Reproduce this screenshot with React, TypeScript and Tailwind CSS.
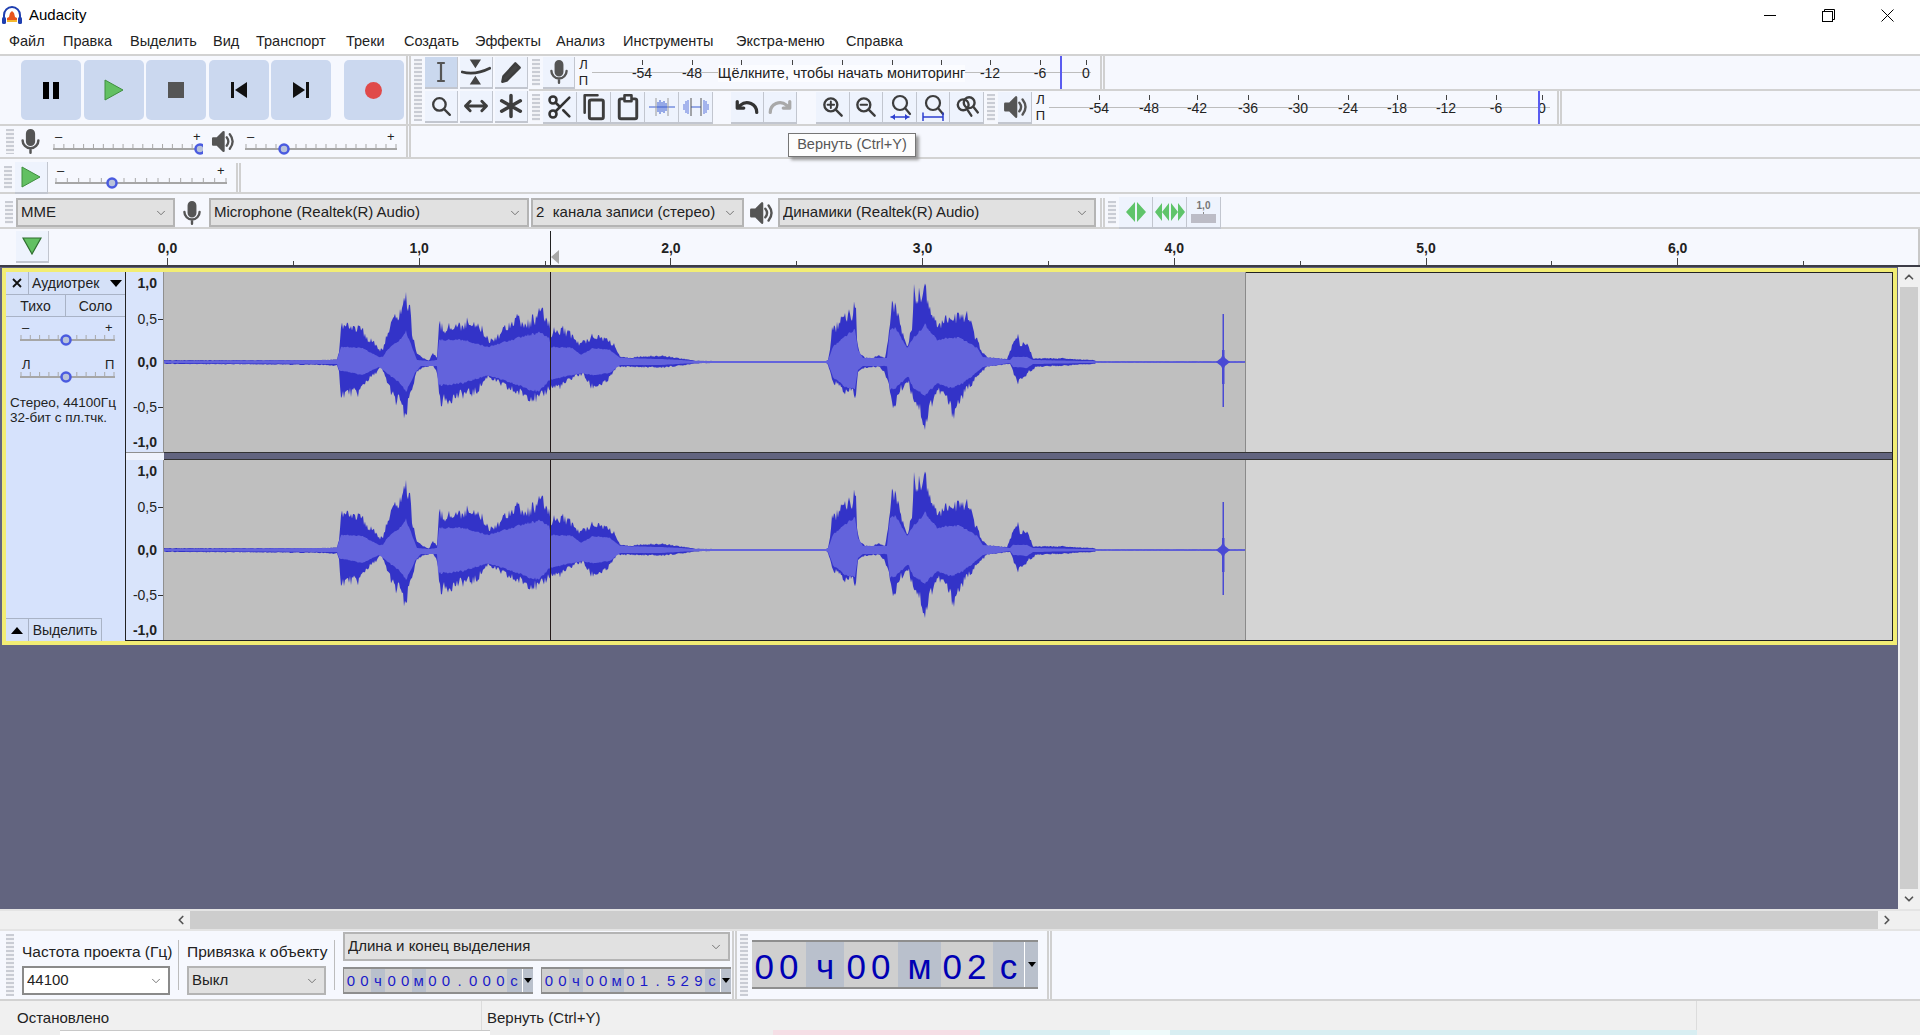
import { ChevronDown, ChevronLeft, ChevronRight, ChevronUp, Scissors } from "lucide-react";
import type { ReactNode } from "react";

const MENU = [
  { t: "Файл", c: "w-[54px]" },
  { t: "Правка", c: "w-[67px]" },
  { t: "Выделить", c: "w-[83px]" },
  { t: "Вид", c: "w-[43px]" },
  { t: "Транспорт", c: "w-[90px]" },
  { t: "Треки", c: "w-[58px]" },
  { t: "Создать", c: "w-[71px]" },
  { t: "Эффекты", c: "w-[81px]" },
  { t: "Анализ", c: "w-[67px]" },
  { t: "Инструменты", c: "w-[113px]" },
  { t: "Экстра-меню", c: "w-[110px]" },
  { t: "Справка", c: "w-[70px]" },
];

type Pt = [number, number];

// waveform envelopes, [page x, offset from the channel centre]
const PEAK_TOP: Pt[] = [
  [164, -2], [316, -2], [337, -3], [339, -12], [341, -41], [349, -39], [358, -37], [361, -39], [366, -25], [372, -25], [379, -14], [383, -12], [387, -32], [396, -50], [400, -52], [404, -70], [410, -60], [412, -32], [417, -10], [423, -4], [429, -2], [433, -9], [437, -5], [439, -44], [442, -37], [459, -39], [473, -45], [482, -35], [490, -23], [499, -30], [507, -40], [516, -48], [526, -39], [541, -54], [549, -42], [551, -32], [562, -36], [572, -29], [579, -19], [587, -24], [593, -30], [606, -25], [614, -19], [620, -5], [631, -5], [660, -7], [680, -4], [695, -1.5], [720, -1], [826, -1],
  [828, -2], [830, -15], [832, -35], [835, -35], [840, -44], [847, -52], [852, -50], [854, -59], [856, -59], [857, -22], [860, -9], [865, -5], [870, -3], [878, -7], [885, -4], [888, -22], [892, -64], [895, -62], [900, -39], [907, -17], [912, -39], [914, -74], [918, -74], [924, -80], [928, -69], [935, -42], [943, -45], [950, -49], [957, -49], [968, -50], [973, -35], [980, -15], [987, -5], [1007, -3], [1012, -17], [1018, -29], [1020, -19], [1028, -19], [1033, -4], [1040, -4], [1063, -4], [1077, -3], [1095, -2], [1096, -0.8], [1246, -0.8],
];
const PEAK_BOTTOM: Pt[] = [
  [164, 2], [316, 3], [337, 4], [339, 11], [341, 35], [349, 33], [358, 34], [366, 21], [375, 13], [381, 5], [387, 21], [396, 45], [400, 38], [405, 66], [410, 35], [417, 11], [425, 5], [433, 4], [437, 11], [440, 43], [450, 40], [463, 35], [476, 33], [488, 15], [499, 23], [510, 30], [526, 36], [539, 41], [549, 28], [562, 26], [575, 15], [583, 13], [591, 27], [606, 23], [617, 5], [621, 5], [660, 6], [680, 4], [695, 1.5], [720, 1], [826, 1],
  [828, 3], [832, 20], [843, 30], [847, 35], [852, 30], [856, 38], [858, 11], [865, 6], [880, 5], [888, 18], [892, 51], [895, 45], [900, 31], [908, 20], [912, 35], [920, 51], [925, 71], [930, 48], [937, 31], [945, 36], [953, 56], [960, 41], [970, 25], [980, 13], [987, 5], [1010, 2], [1017, 22], [1022, 21], [1028, 11], [1037, 5], [1063, 4], [1077, 3], [1095, 2], [1096, 0.8], [1246, 0.8],
];
const RMS_TOP: Pt[] = [
  [164, -1], [337, -2], [339, -9], [341, -15], [362, -14], [379, -5], [383, -5], [387, -12], [400, -22], [406, -30], [412, -15], [417, -2], [429, -1], [437, -2], [439, -22], [463, -22], [488, -15], [518, -24], [539, -29], [549, -24], [551, -15], [572, -14], [581, -7], [593, -14], [610, -12], [620, -4], [660, -3], [680, -2], [695, -1], [826, -1],
  [828, -2], [833, -15], [847, -27], [855, -32], [858, -12], [863, -4], [887, -4], [890, -32], [895, -34], [907, -14], [912, -22], [925, -37], [937, -22], [950, -24], [960, -24], [977, -14], [983, -5], [1010, -2], [1013, -5], [1027, -5], [1033, -2], [1096, -0.8], [1246, -0.8],
];
const RMS_BOTTOM: Pt[] = [
  [164, 1], [337, 2], [339, 8], [362, 13], [379, 5], [400, 21], [406, 30], [415, 11], [421, 4], [437, 4], [438, 23], [463, 21], [488, 13], [518, 23], [539, 30], [549, 18], [572, 13], [581, 11], [593, 13], [610, 11], [620, 3], [660, 3], [695, 1], [826, 1],
  [828, 2], [833, 15], [847, 26], [855, 26], [858, 8], [863, 4], [887, 4], [890, 28], [895, 26], [908, 14], [913, 25], [925, 33], [937, 21], [950, 26], [963, 21], [977, 10], [983, 5], [1010, 1], [1013, 5], [1027, 6], [1033, 2], [1096, 0.8], [1246, 0.8],
];

const WAVE_LEFT = 164;
const WAVE_WIDTH = 1082;
const CHANNEL_MID = 90;

function valueAt(points: Pt[], x: number) {
  for (let i = 1; i < points.length; i++) {
    if (x <= points[i][0]) {
      const [x0, y0] = points[i - 1];
      const [x1, y1] = points[i];
      return y0 + ((y1 - y0) * (x - x0)) / (x1 - x0);
    }
  }
  return points[points.length - 1][1];
}

function noise(x: number) {
  const v = Math.sin(x * 12.9898) * 43758.5453;
  return v - Math.floor(v);
}

function envelope(top: Pt[], bottom: Pt[], rough: number) {
  const upper: string[] = [];
  const lower: string[] = [];
  for (let x = WAVE_LEFT; x <= WAVE_LEFT + WAVE_WIDTH; x++) {
    const t = valueAt(top, x);
    const b = valueAt(bottom, x);
    upper.push(`${x - WAVE_LEFT},${(CHANNEL_MID + t * (1.06 - rough * noise(x))).toFixed(1)}`);
    lower.unshift(`${x - WAVE_LEFT},${(CHANNEL_MID + b * (1.06 - rough * noise(x + 91))).toFixed(1)}`);
  }
  return [...upper, ...lower].join(" ");
}

const PEAK_SHAPE = envelope(PEAK_TOP, PEAK_BOTTOM, 0.3);
const RMS_SHAPE = envelope(RMS_TOP, RMS_BOTTOM, 0.1);

function Grip() {
  return (
    <div className="flex w-[14px] shrink-0 justify-center py-[3px]">
      <div className="h-full w-[8px] bg-[repeating-linear-gradient(to_bottom,#c9ccd4_0,#c9ccd4_2px,#f1f2f6_2px,#f1f2f6_4px)]" />
    </div>
  );
}

function ToolbarEnd() {
  return <div className="h-full w-[5px] shrink-0 border-x-2 border-[#d0d0d0]" />;
}

function Icon({ size = 26, children, className }: { size?: number; children: ReactNode; className?: string }) {
  return (
    <svg width={size} height={size} viewBox="0 0 24 24" fill="none" stroke="#3d3d3d" strokeWidth={2.2} strokeLinecap="round" strokeLinejoin="round" className={className}>
      {children}
    </svg>
  );
}

function TransportButton({ children, className = "" }: { children: ReactNode; className?: string }) {
  return <div className={`flex h-[60px] w-[60px] shrink-0 items-center justify-center rounded-[5px] bg-[#cbd8ef] ${className}`}>{children}</div>;
}

function ToolButton({ children, active = false, w = "w-[33px]" }: { children: ReactNode; active?: boolean; w?: string }) {
  return (
    <div className={`flex h-[32px] shrink-0 items-center justify-center border-b-2 border-r border-[#c2c6cf] ${w} ${active ? "bg-[#cad8ee]" : "bg-[#eef3fd]"}`}>
      {children}
    </div>
  );
}

const MicIcon = ({ size = 26 }: { size?: number }) => (
  <Icon size={size}>
    <rect x="9" y="2" width="6" height="13" rx="3" fill="#555" stroke="#555" />
    <path d="M5 11a7 7 0 0 0 14 0M12 18v4" stroke="#555" />
  </Icon>
);

const SpeakerIcon = ({ size = 26 }: { size?: number }) => (
  <Icon size={size}>
    <path d="M3 9h4l6-6v18l-6-6H3z" fill="#555" stroke="#555" />
    <path d="M16 8c2 2.5 2 5.5 0 8M19 5c3.5 4.5 3.5 9.5 0 14" stroke="#555" />
  </Icon>
);

const Lens = ({ cx = 10, cy = 10, r = 6 }: { cx?: number; cy?: number; r?: number }) => (
  <>
    <circle cx={cx} cy={cy} r={r} />
    <path d={`M${cx + r * 0.75} ${cy + r * 0.75}l5.5 5.5`} />
  </>
);

function Slider({ width, thumb, left = "–", right = "+", steps = 15 }: { width: number; thumb: number; left?: string; right?: string; steps?: number }) {
  const ticks = [];
  for (let i = 0; i <= steps; i++) ticks.push(1 + (i * (width - 2)) / steps);
  return (
    <svg width={width} height={28} className="shrink-0">
      <text x={2} y={13} fontSize={13} fill="#222" fontFamily="Liberation Sans">{left}</text>
      <text x={width - 10} y={13} fontSize={13} fill="#222" fontFamily="Liberation Sans">{right}</text>
      {ticks.map((x) => (
        <line key={x} x1={x} x2={x} y1={16} y2={20} stroke="#a8a8a8" />
      ))}
      <rect x={0} y={20} width={width} height={2} fill="#a6a6a6" />
      <circle cx={thumb} cy={21} r={4.5} fill="#b9c3da" stroke="#4a5be0" strokeWidth={2.5} />
    </svg>
  );
}

function Combo({ text, className = "", white = false }: { text: string; className?: string; white?: boolean }) {
  return (
    <div className={`flex h-[29px] shrink-0 items-center justify-between border-2 pl-[3px] pr-[5px] text-[15px] text-[#222] ${white ? "border-[#8a8a8a] bg-white" : "border-[#b4b4b4] bg-[#e1e1e1]"} ${className}`}>
      <span className="truncate whitespace-pre">{text}</span>
      <ChevronDown size={14} strokeWidth={1.5} className="shrink-0 text-[#666]" />
    </div>
  );
}

type MeterLabel = { x: number; t?: string };

function Meter({ left, width, labels, peak, message }: { left: number; width: number; labels: MeterLabel[]; peak: number; message?: boolean }) {
  return (
    <div className="relative h-[33px] shrink-0 self-center" style={{ width }}>
      <div className="absolute inset-x-0 top-[16px] h-[1px] bg-[#bdbdbd]" />
      {labels.map((l) => (
        <div key={l.x} className="absolute top-0" style={{ left: l.x - left }}>
          <div className="absolute left-0 top-[4px] h-[5px] w-[1px] bg-[#444]" />
          {l.t && <span className="absolute left-[-15px] top-[9px] w-[30px] text-center text-[14px] leading-[16px] text-[#222]">{l.t}</span>}
        </div>
      ))}
      {message && (
        <div className="absolute left-[126px] top-[9px] flex h-[17px] w-[247px] items-center justify-center whitespace-nowrap bg-[#fbfcff] text-[14.5px] text-[#222]">
          Щёлкните, чтобы начать мониторинг
        </div>
      )}
      <div className="absolute top-0 h-full w-[2px] bg-[#5a5cf0]" style={{ left: peak - left }} />
    </div>
  );
}

function LeftRight() {
  return (
    <div className="flex w-[17px] shrink-0 flex-col items-center justify-center text-[13px] leading-[16px] text-[#222]">
      <span>Л</span>
      <span>П</span>
    </div>
  );
}

const METER_TOP: MeterLabel[] = [
  { x: 642, t: "-54" }, { x: 692, t: "-48" }, { x: 741 }, { x: 792 }, { x: 842 }, { x: 892 }, { x: 941 }, { x: 990, t: "-12" }, { x: 1040, t: "-6" }, { x: 1086, t: "0" },
];
const METER_BOTTOM: MeterLabel[] = [
  { x: 1098, t: "-54" }, { x: 1148, t: "-48" }, { x: 1196, t: "-42" }, { x: 1247, t: "-36" }, { x: 1297, t: "-30" }, { x: 1347, t: "-24" }, { x: 1396, t: "-18" }, { x: 1445, t: "-12" }, { x: 1495, t: "-6" }, { x: 1541, t: "0" },
];

function TimeField({ chars }: { chars: string }) {
  return (
    <div className="flex h-[27px] w-[190px] shrink-0 items-center border-y-2 border-l border-[#8e8e8e] bg-[#b9c0cc]">
      {chars.split("").map((c, i) => (
        <div
          key={i}
          className={`flex h-full w-[13.6px] items-center justify-center pt-[1px] text-[15px] text-[#1a1ac8] ${"чмс".includes(c) ? "bg-[#b9c0cc]" : "bg-[#cfcfcf]"}`}
        >
          {c}
        </div>
      ))}
      <div className="ml-[1px] flex h-full flex-1 items-center justify-center border-l border-white">
        <div className="h-0 w-0 border-x-[4px] border-t-[5px] border-x-transparent border-t-black" />
      </div>
    </div>
  );
}

function BigDigits({ text, w }: { text: string; w: string }) {
  return (
    <div className={`flex h-full items-center justify-center bg-[#cfcfcf] pt-[5px] text-[35px] tracking-[5px] text-[#0000b4] ${w}`}>{text}</div>
  );
}

function BigUnit({ text, w }: { text: string; w: string }) {
  return <div className={`flex h-full items-center justify-center pt-[5px] text-[35px] text-[#0000b4] ${w}`}>{text}</div>;
}

function Channel({ first = false }: { first?: boolean }) {
  const ticks = [
    { y: 11, t: "1,0", bold: true },
    { y: 47, t: "0,5", bold: false },
    { y: 90, t: "0,0", bold: true },
    { y: 135, t: "-0,5", bold: false },
    { y: 170, t: "-1,0", bold: true },
  ];
  return (
    <div className="flex h-[180px]">
      <div className="relative w-[38px] shrink-0 border-r border-[#8f8f8f] bg-[#d9e4fb]">
        {ticks.map((l) => (
          <div key={l.t} className="absolute left-0 flex w-[37px] items-center justify-end -translate-y-1/2" style={{ top: l.y }}>
            <span className={`pr-[1px] text-[14px] leading-[16px] text-[#222] ${l.bold ? "font-bold" : ""}`}>{l.t}</span>
            <span className={`h-[1px] w-[5px] ${l.bold ? "bg-transparent" : "bg-[#333]"}`} />
          </div>
        ))}
      </div>
      <svg width={WAVE_WIDTH} height={180} className="shrink-0">
        <rect width={WAVE_WIDTH} height={180} fill="#bfbfbf" />
        <polygon points={PEAK_SHAPE} fill="#3333c8" />
        <polygon points={RMS_SHAPE} fill="#6363dc" />
        <rect x={1058.5} y={CHANNEL_MID - 48} width={1.5} height={93} fill="#4a4ad4" />
        <rect x={1058} y={CHANNEL_MID - 12} width={2.5} height={34} fill="#4a4ad4" />
        <polygon points={`1052,${CHANNEL_MID} 1057,${CHANNEL_MID - 4} 1059,${CHANNEL_MID - 8} 1061,${CHANNEL_MID - 4} 1066,${CHANNEL_MID} 1061,${CHANNEL_MID + 4} 1059,${CHANNEL_MID + 8} 1057,${CHANNEL_MID + 4}`} fill="#4a4ad4" />
        <rect x={386} y={0} width={1} height={180} fill="#241a1a" />
        <rect x={1081} y={0} width={1} height={180} fill="#8a8a8a" />
      </svg>
      <div className={`flex-1 bg-[#d4d4d4] ${first ? "border-t border-[#222]" : ""}`} />
    </div>
  );
}

const TickRow = [0, 1, 2, 3, 4, 5, 6];

export default function App() {
  return (
    <div className="relative flex h-[1035px] w-[1920px] flex-col overflow-hidden bg-[#f6f8fe] font-['Liberation_Sans',sans-serif] text-[14px] text-[#222]">
      {/* title bar */}
      <div className="flex h-[30px] shrink-0 items-center bg-white pl-[2px]">
        <svg width="20" height="19" viewBox="0 0 20 19" className="mr-[7px]">
          <path d="M2 13V9a8 8 0 0 1 16 0v4" fill="none" stroke="#1f3fb0" strokeWidth="2" />
          <rect x="0" y="11" width="4" height="7" rx="1.5" fill="#1f3fb0" />
          <rect x="16" y="11" width="4" height="7" rx="1.5" fill="#1f3fb0" />
          <path d="M5 16v-4l2-1 1-4 2-2 2 2 1 4 2 1v4z" fill="#e8541c" />
          <path d="M5 16v-2h10v2z" fill="#f5b82e" />
        </svg>
        <span className="text-[15px] text-black">Audacity</span>
        <div className="ml-auto flex items-center">
          <div className="h-[1px] w-[12px] bg-black" />
          <svg width="13" height="13" viewBox="0 0 13 13" className="ml-[46px]" fill="none" stroke="#000">
            <rect x="0.5" y="2.5" width="10" height="10" />
            <path d="M2.5 2.5v-2h10v10h-2" />
          </svg>
          <svg width="13" height="13" viewBox="0 0 13 13" className="ml-[46px] mr-[26px]" stroke="#000">
            <path d="M0.5 0.5l12 12M12.5 0.5l-12 12" />
          </svg>
        </div>
      </div>

      {/* menu */}
      <div className="flex h-[24px] shrink-0 items-center bg-white pl-[9px] text-[14.5px] text-[#222]">
        {MENU.map((m) => (
          <span key={m.t} className={`shrink-0 whitespace-nowrap ${m.c}`}>{m.t}</span>
        ))}
      </div>

      {/* top toolbars */}
      <div className="flex h-[70px] shrink-0 border-t-2 border-[#d2d2d2]">
        <div className="flex h-full w-[406px] shrink-0 items-center pl-[3px]">
          <Grip />
          <div className="ml-[4px] flex gap-[2.5px]">
            <TransportButton>
              <div className="flex gap-[4px]">
                <div className="h-[17px] w-[6px] bg-black" />
                <div className="h-[17px] w-[6px] bg-black" />
              </div>
            </TransportButton>
            <TransportButton>
              <svg width="20" height="22" viewBox="0 0 20 22">
                <path d="M1 1l18 10L1 21z" fill="#62c062" stroke="#3f8f3f" />
              </svg>
            </TransportButton>
            <TransportButton>
              <div className="h-[16px] w-[16px] bg-[#555]" />
            </TransportButton>
            <TransportButton>
              <svg width="16" height="16" viewBox="0 0 16 16">
                <path d="M0 0h3v16H0zM16 0v16L4 8z" fill="#111" />
              </svg>
            </TransportButton>
            <TransportButton>
              <svg width="16" height="16" viewBox="0 0 16 16">
                <path d="M13 0h3v16h-3zM0 0v16l12-8z" fill="#111" />
              </svg>
            </TransportButton>
            <TransportButton className="ml-[10px]">
              <div className="h-[17px] w-[17px] rounded-full bg-[#e04a4a]" />
            </TransportButton>
          </div>
        </div>
        <ToolbarEnd />
        <Grip />
        <div className="grid h-full w-[104px] shrink-0 grid-cols-[33px_33px_33px] content-center gap-[2px]">
          <ToolButton active>
            <Icon size={24}><path d="M9 3h6M12 3v18M9 21h6" stroke="#555" /></Icon>
          </ToolButton>
          <ToolButton>
            <Icon size={30}>
              <path d="M7 2h9l-4.5 7zM7 22h9l-4.5-7z" fill="#444" stroke="none" />
              <path d="M1 12c7 2 14 1 22-3" />
            </Icon>
          </ToolButton>
          <ToolButton>
            <Icon size={26}><path d="M4 21l1-5L16 4l4 4L8 20z" fill="#444" /></Icon>
          </ToolButton>
          <ToolButton>
            <Icon size={25}><Lens /></Icon>
          </ToolButton>
          <ToolButton>
            <Icon size={28}><path d="M3 12h18M7 8l-4 4 4 4M17 8l4 4-4 4" strokeWidth={2.5} /></Icon>
          </ToolButton>
          <ToolButton>
            <Icon size={28}><path d="M12 3v18M4 7.5l16 9M20 7.5l-16 9" strokeWidth={3} /></Icon>
          </ToolButton>
        </div>

        <div className="flex h-full flex-1 flex-col">
          {/* recording meter */}
          <div className="flex h-[35px] shrink-0 items-center border-b-2 border-[#d2d2d2]">
            <div className="flex h-full"><Grip /></div>
            <ToolButton w="w-[32px]"><MicIcon /></ToolButton>
            <LeftRight />
            <Meter left={592} width={499} labels={METER_TOP} peak={1060} message />
            <div className="ml-[9px] h-full"><ToolbarEnd /></div>
          </div>
          {/* edit toolbar and playback meter */}
          <div className="flex h-[33px] shrink-0 items-center">
            <div className="flex h-full"><Grip /></div>
            <ToolButton w="w-[34px]"><Scissors size={28} strokeWidth={2.2} className="text-[#333]" /></ToolButton>
            <ToolButton w="w-[34px]">
              <Icon size={28}>
                <path d="M4 17V2h11" />
                <rect x="8" y="6" width="12" height="16" rx="1.5" strokeWidth={2.5} />
              </Icon>
            </ToolButton>
            <ToolButton w="w-[34px]">
              <Icon size={28}>
                <rect x="4.5" y="5" width="15" height="17" rx="1.5" strokeWidth={2.5} />
                <rect x="9" y="2" width="6" height="5" fill="#eef3fd" />
              </Icon>
            </ToolButton>
            <ToolButton w="w-[34px]">
              <svg width="26" height="20" viewBox="0 0 26 20" fill="none">
                <path d="M0 10h26" stroke="#3d5fd0" />
                <path d="M9 5v10M11 3v14M13 5v10M15 4v12M17 6v8" stroke="#3d5fd0" />
                <path d="M7 1v18M19 1v18" stroke="#9a9a9a" />
              </svg>
            </ToolButton>
            <ToolButton w="w-[34px]">
              <svg width="26" height="20" viewBox="0 0 26 20" fill="none">
                <path d="M8 10h10" stroke="#3d5fd0" />
                <path d="M1 7v6M3 4v12M5 3v14M21 3v14M23 4v12M25 7v6" stroke="#5b74dc" />
                <path d="M8 1v18M18 1v18" stroke="#555" />
              </svg>
            </ToolButton>
            <div className="w-[18px] shrink-0" />
            <ToolButton w="w-[33px]">
              <Icon size={26}><path d="M3 7v6h6M21 17a9 9 0 0 0-15-6.7L3 13" strokeWidth={3} stroke="#333" /></Icon>
            </ToolButton>
            <ToolButton w="w-[33px]">
              <Icon size={26}><path d="M21 7v6h-6M3 17a9 9 0 0 1 15-6.7L21 13" strokeWidth={3} stroke="#a9a9a9" /></Icon>
            </ToolButton>
            <div className="w-[19px] shrink-0" />
            <ToolButton w="w-[34px]">
              <Icon size={26}><Lens /><path d="M10 7v6M7 10h6" strokeWidth={1.8} /></Icon>
            </ToolButton>
            <ToolButton w="w-[33px]">
              <Icon size={26}><Lens /><path d="M7 10h6" strokeWidth={1.8} /></Icon>
            </ToolButton>
            <ToolButton w="w-[34px]">
              <svg width="26" height="28" viewBox="0 0 26 28" fill="none" stroke="#3d3d3d" strokeWidth="2.2" strokeLinecap="round">
                <circle cx="13" cy="10" r="7" />
                <path d="M18 15l5 6" />
                <path d="M4 24h18" stroke="#2d3fd0" strokeWidth="1.5" />
                <path d="M8 21l-4 3 4 3zM18 21l4 3-4 3z" fill="#2d3fd0" stroke="none" />
              </svg>
            </ToolButton>
            <ToolButton w="w-[33px]">
              <svg width="26" height="28" viewBox="0 0 26 28" fill="none" stroke="#3d3d3d" strokeWidth="2.2" strokeLinecap="round">
                <circle cx="13" cy="10" r="7" />
                <path d="M18 15l5 6" />
                <path d="M4 24h18M3 20v8M23 20v8" stroke="#2d3fd0" strokeWidth="1.5" />
              </svg>
            </ToolButton>
            <ToolButton w="w-[34px]">
              <Icon size={26}>
                <circle cx="8.5" cy="10" r="5" />
                <circle cx="14" cy="8" r="5" />
                <path d="M18 12l4 5M12 14l4 6" />
              </Icon>
            </ToolButton>
            <div className="flex h-full"><Grip /></div>
            <ToolButton w="w-[34px]"><SpeakerIcon /></ToolButton>
            <LeftRight />
            <Meter left={1048} width={501} labels={METER_BOTTOM} peak={1537} />
            <div className="ml-[7px] h-full"><ToolbarEnd /></div>
          </div>
        </div>
      </div>

      {/* tooltip over the toolbars */}
      <div className="absolute left-[788px] top-[133px] z-10 flex h-[24px] w-[128px] items-center justify-center border border-[#767676] bg-[#fdfdfd] text-[14.5px] text-[#575757] shadow-[3px_3px_3px_#9a9a9a]">
        Вернуть (Ctrl+Y)
      </div>

      {/* mixer */}
      <div className="flex h-[35px] shrink-0 items-center border-y-2 border-[#d2d2d2] pl-[3px]">
        <div className="flex h-full"><Grip /></div>
        <div className="flex w-[36px] shrink-0 justify-start"><MicIcon size={27} /></div>
        <Slider width={150} thumb={147} />
        <div className="flex w-[42px] shrink-0 justify-center pr-[4px]"><SpeakerIcon size={25} /></div>
        <Slider width={152} thumb={39} />
        <div className="ml-[9px] h-full"><ToolbarEnd /></div>
      </div>

      {/* transcription */}
      <div className="flex h-[35px] shrink-0 items-center border-b-2 border-[#d2d2d2] pl-[1px] pt-[4px]">
        <div className="flex h-full"><Grip /></div>
        <ToolButton>
          <svg width="20" height="22" viewBox="0 0 20 22">
            <path d="M1 1l18 10L1 21z" fill="#62c062" stroke="#3f8f3f" />
          </svg>
        </ToolButton>
        <div className="-mt-[4px] ml-[7px]"><Slider width={172} thumb={57} /></div>
        <div className="ml-[9px] h-full"><ToolbarEnd /></div>
      </div>

      {/* devices */}
      <div className="flex h-[35px] shrink-0 items-center border-b-2 border-[#d2d2d2] pl-[2px] pt-[4px]">
        <div className="flex h-full"><Grip /></div>
        <Combo text="MME" className="w-[159px]" />
        <div className="flex w-[34px] justify-center"><MicIcon /></div>
        <Combo text="Microphone (Realtek(R) Audio)" className="w-[320px]" />
        <Combo text="2  канала записи (стерео)" className="ml-[2px] w-[213px]" />
        <div className="flex w-[34px] justify-center"><SpeakerIcon /></div>
        <Combo text="Динамики (Realtek(R) Audio)" className="w-[318px]" />
        <div className="ml-[4px] h-full"><ToolbarEnd /></div>
        <div className="flex h-full"><Grip /></div>
        <ToolButton w="w-[34px]">
          <svg width="22" height="22" viewBox="0 0 22 22" fill="#5fc46a">
            <path d="M10 1v20L1 11zM12 1v20l9-10z" />
          </svg>
        </ToolButton>
        <ToolButton w="w-[34px]">
          <svg width="32" height="20" viewBox="0 0 32 20" fill="#5fc46a">
            <path d="M8 1v18L1 10zM15 1v18L8 10zM17 1v18l7-9zM24 1v18l7-9z" />
          </svg>
        </ToolButton>
        <ToolButton w="w-[34px]">
          <div className="flex flex-col items-center">
            <span className="text-[10px] font-bold leading-[12px] text-[#777]">1,0</span>
            <div className="h-[2px] w-[1px] bg-[#888]" />
            <div className="h-[9px] w-[25px] bg-[#bcbcc6]" />
          </div>
        </ToolButton>
      </div>

      {/* timeline ruler */}
      <div className="relative h-[36px] shrink-0 border-r-2 border-[#c8c8c8]">
        <div className="absolute left-[16px] top-[2px]">
          <ToolButton w="w-[33px]">
            <svg width="20" height="18" viewBox="0 0 20 18">
              <path d="M1 1h18L10 17z" fill="#62c062" stroke="#2f6f2f" strokeWidth="1.2" />
            </svg>
          </ToolButton>
        </div>
        {TickRow.map((s) => (
          <div key={s}>
            <span className="absolute top-[11px] w-[40px] -translate-x-1/2 text-center text-[14px] font-bold leading-[16px]" style={{ left: 167.5 + s * 251.7 }}>
              {s},0
            </span>
            <div className="absolute bottom-0 h-[7px] w-[1px] bg-[#444]" style={{ left: 167 + s * 251.7 }} />
            <div className="absolute bottom-0 h-[4px] w-[1px] bg-[#444]" style={{ left: 167 + (s + 0.5) * 251.7 }} />
          </div>
        ))}
        <div className="absolute bottom-0 left-[550px] top-[2px] w-[1px] bg-[#222]" />
        <div className="absolute bottom-[1px] left-[551px] h-0 w-0 border-y-[7px] border-r-[8px] border-y-transparent border-r-[#a8a8a8]" />
      </div>
      <div className="h-[2px] shrink-0 bg-[#3c3c46]" />

      {/* tracks */}
      <div className="flex h-[642px] shrink-0">
        <div className="flex-1 bg-[#62647f] pt-[1px]">
          <div className="ml-[2px] mr-[1px] flex h-[377px] border-4 border-[#f2ed74]">
            <div className="flex w-[120px] shrink-0 flex-col border-r border-[#222] bg-[#d6e2fc] text-[14px]">
              <div className="flex h-[23px] shrink-0">
                <div className="flex w-[23px] items-center justify-center border-b border-r border-[#a9b3c6] bg-[#d5e1f8]">
                  <svg width="10" height="10" viewBox="0 0 10 10" stroke="#111" strokeWidth="1.8">
                    <path d="M1 1l8 8M9 1l-8 8" />
                  </svg>
                </div>
                <div className="flex flex-1 items-center justify-between border-b border-[#a9b3c6] bg-[#d5e1f8] pl-[3px] pr-[3px] pt-[1px]">
                  <span>Аудиотрек</span>
                  <div className="h-0 w-0 border-x-[6px] border-t-[7px] border-x-transparent border-t-black" />
                </div>
              </div>
              <div className="flex h-[22px] shrink-0">
                <div className="flex w-[60px] items-center justify-center border-b border-r border-[#a9b3c6] bg-[#d5e1f8] pt-[2px]">Тихо</div>
                <div className="flex flex-1 items-center justify-center border-b border-[#a9b3c6] bg-[#d5e1f8] pt-[2px]">Соло</div>
              </div>
              <div className="ml-[14px] mt-[2px]"><Slider width={95} thumb={46} steps={10} /></div>
              <div className="ml-[14px] mt-[9px]"><Slider width={95} thumb={46} left="Л" right="П" steps={10} /></div>
              <div className="ml-[4px] mt-[11px] whitespace-nowrap text-[13.5px] leading-[15px]">
                Стерео, 44100Гц
                <br />
                32-бит с пл.тчк.
              </div>
              <div className="mt-auto flex h-[23px] shrink-0">
                <div className="flex w-[23px] items-center justify-center border-r border-t border-[#a9b3c6] bg-[#d5e1f8]">
                  <div className="h-0 w-0 border-x-[6px] border-b-[7px] border-x-transparent border-b-black" />
                </div>
                <div className="flex w-[73px] items-center justify-center border-r border-t border-[#a9b3c6] bg-[#d5e1f8]">Выделить</div>
              </div>
            </div>
            <div className="flex flex-1 flex-col border-r border-[#222]">
              <Channel first />
              <div className="flex h-[8px] shrink-0">
                <div className="w-[38px] shrink-0 border-t border-[#8f8f8f] bg-[#eef2fc]" />
                <div className="flex-1 border-y border-[#333] bg-[#62647f]" />
              </div>
              <Channel />
              <div className="h-[1px] shrink-0 bg-[#222]" />
            </div>
          </div>
        </div>
        <div className="flex w-[22px] shrink-0 flex-col items-center bg-[#f0f0f0]">
          <ChevronUp size={14} strokeWidth={3} className="my-[3px] text-[#555]" />
          <div className="w-[18px] flex-1 bg-[#cdcdcd]" />
          <ChevronDown size={14} strokeWidth={3} className="my-[3px] text-[#555]" />
        </div>
      </div>

      {/* horizontal scroll */}
      <div className="flex h-[22px] shrink-0 items-center border-y-2 border-[#e4e4e4] bg-[#f0f0f0] pl-[174px] pr-[26px]">
        <ChevronLeft size={14} strokeWidth={3} className="shrink-0 text-[#555]" />
        <div className="mx-[2px] h-full flex-1 bg-[#cdcdcd]" />
        <ChevronRight size={14} strokeWidth={3} className="shrink-0 text-[#555]" />
      </div>

      {/* selection toolbar */}
      <div className="flex h-[70px] shrink-0 items-stretch border-b-2 border-[#d2d2d2] pl-[3px]">
        <Grip />
        <div className="ml-[5px] flex w-[148px] shrink-0 flex-col justify-between pb-[4px] pt-[9px]">
          <span className="whitespace-nowrap text-[15.5px]">Частота проекта (Гц)</span>
          <Combo text="44100" white className="w-[148px]" />
        </div>
        <div className="mx-[8px] my-[9px] w-[1px] shrink-0 bg-[#bcbcbc]" />
        <div className="flex w-[139px] shrink-0 flex-col justify-between pb-[4px] pt-[9px]">
          <span className="whitespace-nowrap text-[15.5px]">Привязка к объекту</span>
          <Combo text="Выкл" className="w-[139px]" />
        </div>
        <div className="mx-[8px] my-[9px] w-[1px] shrink-0 bg-[#bcbcbc]" />
        <div className="flex w-[388px] shrink-0 flex-col justify-between pb-[5px] pt-[1px]">
          <Combo text="Длина и конец выделения" className="w-[387px]" />
          <div className="flex gap-[8px]">
            <TimeField chars="00ч00м00.000с" />
            <TimeField chars="00ч00м01.529с" />
          </div>
        </div>
        <div className="ml-[1px] flex"><ToolbarEnd /></div>
        <Grip />
        <div className="ml-[1px] mt-[9px] flex h-[49px] w-[286px] shrink-0 items-stretch border-y-2 border-[#8e8e8e] bg-[#b9c0cc]">
          <BigDigits text="00" w="w-[54px]" />
          <BigUnit text="ч" w="w-[38px]" />
          <BigDigits text="00" w="w-[54px]" />
          <BigUnit text="м" w="w-[43px]" />
          <BigDigits text="02" w="w-[52px]" />
          <BigUnit text="с" w="w-[31px]" />
          <div className="flex flex-1 items-center justify-center border-l border-white">
            <div className="h-0 w-0 border-x-[4px] border-t-[5px] border-x-transparent border-t-black" />
          </div>
        </div>
        <div className="ml-[9px] flex"><ToolbarEnd /></div>
      </div>

      {/* status bar */}
      <div className="flex h-[29px] shrink-0 items-center bg-[#f0f0f0] text-[15px]">
        <div className="flex h-full w-[482px] items-center border-r border-[#dcdcdc] pl-[17px] pt-[6px]">Остановлено</div>
        <div className="flex h-full w-[1215px] items-center border-r border-[#dcdcdc] pl-[5px] pt-[6px]">Вернуть (Ctrl+Y)</div>
      </div>
      <div className="flex h-[5px] shrink-0">
        <div className="w-[60px] bg-[#eeeeee]" />
        <div className="w-[430px] border-t border-[#c8c8c8] bg-white" />
        <div className="w-[283px] bg-[#eeeeee]" />
        <div className="w-[207px] bg-[#f5dfe6]" />
        <div className="w-[130px] bg-[#d8eef2]" />
        <div className="w-[60px] bg-[#eefafa]" />
        <div className="w-[527px] bg-[#d8eef2]" />
        <div className="flex-1 bg-[#f0f0f0]" />
      </div>
    </div>
  );
}
